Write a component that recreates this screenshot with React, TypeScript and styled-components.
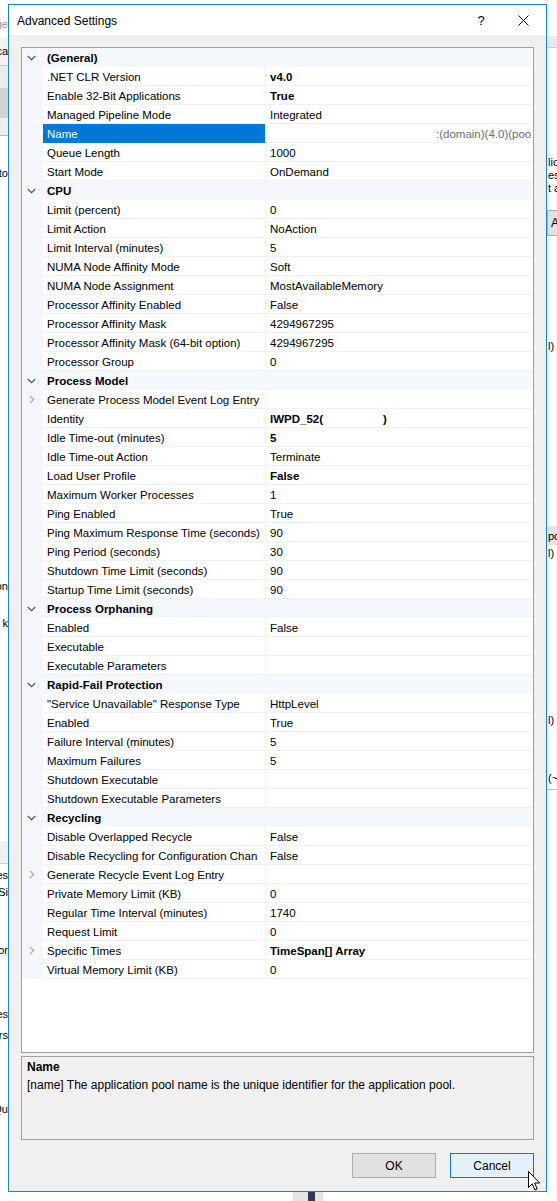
import React from "react";
import styled, { createGlobalStyle } from "styled-components";

const Global = createGlobalStyle`
  html, body { margin: 0; padding: 0; background: #fff; }
  body { font-family: "Liberation Sans", Arial, sans-serif; }
  * { box-sizing: border-box; }
`;

const FONT = `"Liberation Sans", Arial, sans-serif`;

const Desktop = styled.div`
  position: relative;
  width: 557px;
  height: 1201px;
  overflow: hidden;
  background: #fff;
  font-family: ${FONT};
`;

/* slivers of the window behind the dialog */
const Strip = styled.div<{ $side: "left" | "right" }>`
  position: absolute;
  top: 0;
  ${(p) => (p.$side === "left" ? "left: 0; width: 8px;" : "left: 547px; width: 10px;")}
  height: 1201px;
  display: flex;
  flex-direction: column;
  overflow: hidden;
`;

const Slot = styled.div<{ $h: number; $bg?: string; $line?: string; $color?: string; $end?: boolean }>`
  height: ${(p) => p.$h}px;
  flex-shrink: 0;
  display: flex;
  align-items: center;
  justify-content: ${(p) => (p.$end ? "flex-end" : "flex-start")};
  padding-left: ${(p) => (p.$end ? 0 : 1)}px;
  background: ${(p) => p.$bg ?? "transparent"};
  border-bottom: ${(p) => (p.$line ? `1px solid ${p.$line}` : "none")};
  font-size: 11px;
  line-height: 12px;
  color: ${(p) => p.$color ?? "#000"};
  white-space: nowrap;
`;

const BackButton = styled.div`
  height: 26px;
  width: 30px;
  flex-shrink: 0;
  border: 1px solid #adadad;
  background: #e1e1e1;
  font-size: 12px;
  line-height: 24px;
  padding-left: 3px;
`;

const Taskbar = styled.div`
  position: absolute;
  left: 293px;
  top: 1192px;
  width: 30px;
  height: 9px;
  background: #e4e4e4;
  display: flex;
  justify-content: center;
`;

const TaskMark = styled.div`
  width: 7px;
  height: 9px;
  margin-left: 6px;
  background: #2c3a54;
`;

const Dialog = styled.div`
  position: absolute;
  left: 8px;
  top: 4px;
  width: 539px;
  height: 1188px;
  border: 1px solid #1883d7;
  background: #f0f0f0;
  display: flex;
  flex-direction: column;
  z-index: 1;
`;

const TitleBar = styled.div`
  height: 30px;
  background: #fff;
  display: flex;
  align-items: center;
  padding-left: 8px;
  flex-shrink: 0;
`;

const TitleText = styled.div`
  flex: 1;
  font-size: 12px;
  color: #000;
  padding-top: 1px;
`;

const TitleButton = styled.div<{ $w: number }>`
  width: ${(p) => p.$w}px;
  height: 30px;
  display: flex;
  align-items: center;
  justify-content: center;
  font-size: 13px;
  color: #000;
`;

const Body = styled.div`
  flex: 1;
  display: flex;
  flex-direction: column;
  padding: 12px 12px 0;
`;

const Grid = styled.div`
  height: 1006px;
  border: 1px solid #a0a0a0;
  background: #fff;
  overflow: hidden;
  flex-shrink: 0;
`;

const CatRow = styled.div`
  height: 19px;
  display: flex;
  align-items: center;
  background: #f4f7fc;
`;

const Gutter = styled.div`
  width: 21px;
  height: 19px;
  flex-shrink: 0;
  background: #f4f7fc;
  display: flex;
  align-items: center;
  justify-content: center;
  padding-right: 2px;
`;

const CatTitle = styled.div`
  padding: 1px 0 0 4px;
  font-size: 11.5px;
  font-weight: bold;
  color: #000;
`;

const PropRow = styled.div`
  height: 19px;
  display: flex;
`;

const NameCell = styled.div<{ $sel?: boolean }>`
  width: 223px;
  flex-shrink: 0;
  height: 19px;
  line-height: 20px;
  padding-left: 4px;
  font-size: 11.5px;
  white-space: nowrap;
  overflow: hidden;
  color: ${(p) => (p.$sel ? "#fff" : "#000")};
  background: ${(p) => (p.$sel ? "#0078d7" : "#fff")};
  border-right: 1px solid #f0f2f6;
  border-bottom: 1px solid ${(p) => (p.$sel ? "#0078d7" : "#f0f2f6")};
`;

const ValueCell = styled.div<{ $bold?: boolean; $muted?: boolean }>`
  flex: 1;
  min-width: 0;
  height: 19px;
  line-height: 20px;
  padding-left: 4px;
  font-size: 11.5px;
  white-space: nowrap;
  overflow: hidden;
  font-weight: ${(p) => (p.$bold ? "bold" : "normal")};
  color: ${(p) => (p.$muted ? "#6d6d6d" : "#000")};
  border-bottom: 1px solid #f0f2f6;
`;

const Gap = styled.span<{ $w: number }>`
  display: inline-block;
  width: ${(p) => p.$w}px;
`;

const DescPanel = styled.div`
  margin-top: 3px;
  height: 84px;
  border: 1px solid #a0a0a0;
  background: #f0f0f0;
  padding: 1px 5px 0;
  font-size: 12px;
  line-height: 18px;
  color: #000;
  flex-shrink: 0;
`;

const DescTitle = styled.div`
  font-weight: bold;
`;

const Footer = styled.div`
  display: flex;
  justify-content: flex-end;
  gap: 14px;
  margin-top: 13px;
`;

const Button = styled.div<{ $hover?: boolean }>`
  width: 84px;
  height: 25px;
  display: flex;
  align-items: center;
  justify-content: center;
  font-size: 12px;
  color: #000;
  background: ${(p) => (p.$hover ? "#e5f1fb" : "#e1e1e1")};
  border: 1px solid ${(p) => (p.$hover ? "#0078d7" : "#adadad")};
`;

const Cursor = styled.svg`
  position: absolute;
  left: 528px;
  top: 1171px;
  z-index: 2;
`;

type Item = {
  n: string;
  v?: string;
  b?: boolean;
  sel?: boolean;
  muted?: boolean;
  indent?: number;
  tail?: string;
  gap?: number;
  expand?: boolean;
};

const categories: { title: string; items: Item[] }[] = [
  {
    title: "(General)",
    items: [
      { n: ".NET CLR Version", v: "v4.0", b: true },
      { n: "Enable 32-Bit Applications", v: "True", b: true },
      { n: "Managed Pipeline Mode", v: "Integrated" },
      { n: "Name", v: ":(domain)(4.0)(poo", sel: true, muted: true, indent: 166 },
      { n: "Queue Length", v: "1000" },
      { n: "Start Mode", v: "OnDemand" },
    ],
  },
  {
    title: "CPU",
    items: [
      { n: "Limit (percent)", v: "0" },
      { n: "Limit Action", v: "NoAction" },
      { n: "Limit Interval (minutes)", v: "5" },
      { n: "NUMA Node Affinity Mode", v: "Soft" },
      { n: "NUMA Node Assignment", v: "MostAvailableMemory" },
      { n: "Processor Affinity Enabled", v: "False" },
      { n: "Processor Affinity Mask", v: "4294967295" },
      { n: "Processor Affinity Mask (64-bit option)", v: "4294967295" },
      { n: "Processor Group", v: "0" },
    ],
  },
  {
    title: "Process Model",
    items: [
      { n: "Generate Process Model Event Log Entry", expand: true },
      { n: "Identity", v: "IWPD_52(", b: true, gap: 60, tail: ")" },
      { n: "Idle Time-out (minutes)", v: "5", b: true },
      { n: "Idle Time-out Action", v: "Terminate" },
      { n: "Load User Profile", v: "False", b: true },
      { n: "Maximum Worker Processes", v: "1" },
      { n: "Ping Enabled", v: "True" },
      { n: "Ping Maximum Response Time (seconds)", v: "90" },
      { n: "Ping Period (seconds)", v: "30" },
      { n: "Shutdown Time Limit (seconds)", v: "90" },
      { n: "Startup Time Limit (seconds)", v: "90" },
    ],
  },
  {
    title: "Process Orphaning",
    items: [
      { n: "Enabled", v: "False" },
      { n: "Executable" },
      { n: "Executable Parameters" },
    ],
  },
  {
    title: "Rapid-Fail Protection",
    items: [
      { n: "\"Service Unavailable\" Response Type", v: "HttpLevel" },
      { n: "Enabled", v: "True" },
      { n: "Failure Interval (minutes)", v: "5" },
      { n: "Maximum Failures", v: "5" },
      { n: "Shutdown Executable" },
      { n: "Shutdown Executable Parameters" },
    ],
  },
  {
    title: "Recycling",
    items: [
      { n: "Disable Overlapped Recycle", v: "False" },
      { n: "Disable Recycling for Configuration Chan", v: "False" },
      { n: "Generate Recycle Event Log Entry", expand: true },
      { n: "Private Memory Limit (KB)", v: "0" },
      { n: "Regular Time Interval (minutes)", v: "1740" },
      { n: "Request Limit", v: "0" },
      { n: "Specific Times", v: "TimeSpan[] Array", b: true, expand: true },
      { n: "Virtual Memory Limit (KB)", v: "0" },
    ],
  },
];

const ChevronDown = () => (
  <svg width="9" height="6" viewBox="0 0 9 6">
    <path d="M0.8 1 L4.5 4.6 L8.2 1" fill="none" stroke="#555" strokeWidth="1.2" />
  </svg>
);

const ChevronRight = () => (
  <svg width="6" height="9" viewBox="0 0 6 9">
    <path d="M1 0.8 L4.6 4.5 L1 8.2" fill="none" stroke="#a6a6a6" strokeWidth="1.2" />
  </svg>
);

const CloseIcon = () => (
  <svg width="11" height="11" viewBox="0 0 11 11">
    <path d="M0.5 0.5 L10.5 10.5 M10.5 0.5 L0.5 10.5" stroke="#000" strokeWidth="1" />
  </svg>
);

export default function App() {
  return (
    <Desktop>
      <Global />
      <Strip $side="left">
        <Slot $h={17} />
        <Slot $h={14} $end $color="#9a9a9a">ge</Slot>
        <Slot $h={6} />
        <Slot $h={29} $end $bg="#f3f3f3" $line="#c9c9c9">ca</Slot>
        <Slot $h={22} $bg="#ececec" />
        <Slot $h={30} $bg="#d2d2d2" />
        <Slot $h={18} $bg="#ededed" $line="#b9b9b9" />
        <Slot $h={30} />
        <Slot $h={14} $end>to</Slot>
        <Slot $h={399} />
        <Slot $h={14} $end>on</Slot>
        <Slot $h={23} />
        <Slot $h={14} $end>k</Slot>
        <Slot $h={211} />
        <Slot $h={23} $bg="#f0f0f0" $line="#d0d0d0" />
        <Slot $h={4} />
        <Slot $h={14} $end>es</Slot>
        <Slot $h={3} />
        <Slot $h={14} $end>Si</Slot>
        <Slot $h={44} />
        <Slot $h={14} $end>or</Slot>
        <Slot $h={50} />
        <Slot $h={14} $end>es</Slot>
        <Slot $h={7} />
        <Slot $h={14} $end>rs</Slot>
        <Slot $h={60} />
        <Slot $h={14} $end>Qu</Slot>
      </Strip>
      <Strip $side="right">
        <Slot $h={36} />
        <Slot $h={12} $bg="#e6ebf1" $line="#c9ced6" />
        <Slot $h={108} />
        <Slot $h={12}>lic</Slot>
        <Slot $h={13}>ess</Slot>
        <Slot $h={14}>t a</Slot>
        <Slot $h={15} />
        <BackButton>A</BackButton>
        <Slot $h={103} />
        <Slot $h={14}>l)</Slot>
        <Slot $h={173} />
        <Slot $h={19} $bg="#e3e3e3">po</Slot>
        <Slot $h={1} />
        <Slot $h={14}>l)</Slot>
        <Slot $h={153} />
        <Slot $h={14}>l)</Slot>
        <Slot $h={44} />
        <Slot $h={14}>(~</Slot>
        <Slot $h={4} />
        <Slot $h={1} $bg="#bdbdbd" />
      </Strip>
      <Taskbar>
        <TaskMark />
      </Taskbar>

      <Dialog>
        <TitleBar>
          <TitleText>Advanced Settings</TitleText>
          <TitleButton $w={38}>?</TitleButton>
          <TitleButton $w={46}>
            <CloseIcon />
          </TitleButton>
        </TitleBar>
        <Body>
          <Grid>
            {categories.map((c) => (
              <React.Fragment key={c.title}>
                <CatRow>
                  <Gutter>
                    <ChevronDown />
                  </Gutter>
                  <CatTitle>{c.title}</CatTitle>
                </CatRow>
                {c.items.map((it, i) => (
                  <PropRow key={c.title + i}>
                    <Gutter>{it.expand ? <ChevronRight /> : null}</Gutter>
                    <NameCell $sel={it.sel}>{it.n}</NameCell>
                    <ValueCell $bold={it.b} $muted={it.muted}>
                      {it.indent ? <Gap $w={it.indent} /> : null}
                      {it.v}
                      {it.gap ? <Gap $w={it.gap} /> : null}
                      {it.tail}
                    </ValueCell>
                  </PropRow>
                ))}
              </React.Fragment>
            ))}
          </Grid>
          <DescPanel>
            <DescTitle>Name</DescTitle>
            <div>[name] The application pool name is the unique identifier for the application pool.</div>
          </DescPanel>
          <Footer>
            <Button>OK</Button>
            <Button $hover>Cancel</Button>
          </Footer>
        </Body>
      </Dialog>
      <Cursor width="13" height="21" viewBox="0 0 13 21">
        <path d="M0.5 0.5 L0.5 16.5 L4.3 12.8 L6.9 19 L9.2 18 L6.7 12 L11.7 12 Z" fill="#fff" stroke="#000" strokeWidth="1" />
      </Cursor>
    </Desktop>
  );
}
